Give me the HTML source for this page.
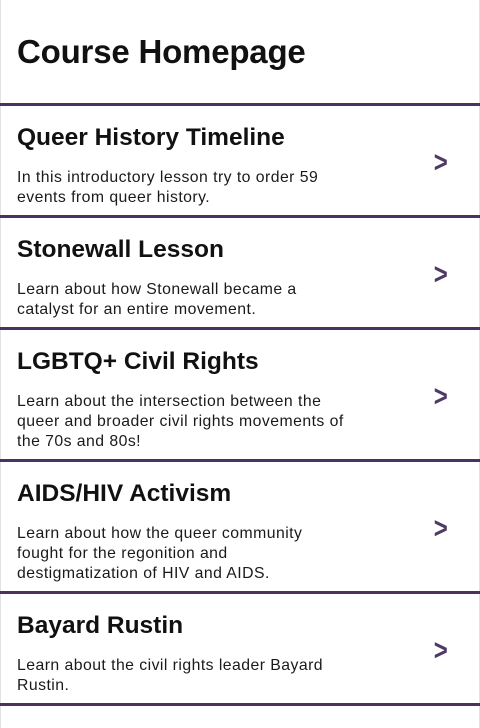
<!DOCTYPE html>
<html><head><meta charset="utf-8"><style>
*{margin:0;padding:0;box-sizing:border-box}
body{width:480px;height:728px;background:#fff;font-family:"Liberation Sans",sans-serif;color:#111;overflow:hidden;position:relative}
.frame{position:absolute;left:0;top:0;width:480px;height:728px;border-left:1px solid #e2e2e2;border-right:1px solid #e2e2e2}
h1{position:absolute;left:17px;top:32px;font-size:33px;line-height:40px;font-weight:bold;letter-spacing:-0.2px}
.list{position:absolute;top:103px;left:0;width:480px;border-top:3px solid #4b3260}
.card{position:relative;border-bottom:3px solid #4b3260;padding:18px 0 7px 17px}
.card h2{font-size:24.5px;line-height:28px;font-weight:bold;margin-bottom:16px}
.card p{font-size:15.8px;line-height:20px;letter-spacing:0.45px;white-space:nowrap;color:#1a1a1a}
.chev{position:absolute;left:432px;top:50%;margin-top:-13px;font-size:30px;line-height:30px;font-weight:bold;color:#4f3a66;transform:scaleX(0.8)}
</style></head><body>
<div class="frame"></div>
<h1>Course Homepage</h1>
<div class="list">
<div class="card"><h2>Queer History Timeline</h2><p>In this introductory lesson try to order 59<br>events from queer history.</p><span class="chev">&gt;</span></div>
<div class="card"><h2>Stonewall Lesson</h2><p>Learn about how Stonewall became a<br>catalyst for an entire movement.</p><span class="chev">&gt;</span></div>
<div class="card"><h2>LGBTQ+ Civil Rights</h2><p>Learn about the intersection between the<br>queer and broader civil rights movements of<br>the 70s and 80s!</p><span class="chev">&gt;</span></div>
<div class="card"><h2>AIDS/HIV Activism</h2><p>Learn about how the queer community<br>fought for the regonition and<br>destigmatization of HIV and AIDS.</p><span class="chev">&gt;</span></div>
<div class="card"><h2>Bayard Rustin</h2><p>Learn about the civil rights leader Bayard<br>Rustin.</p><span class="chev">&gt;</span></div>
</div>
</body></html>
